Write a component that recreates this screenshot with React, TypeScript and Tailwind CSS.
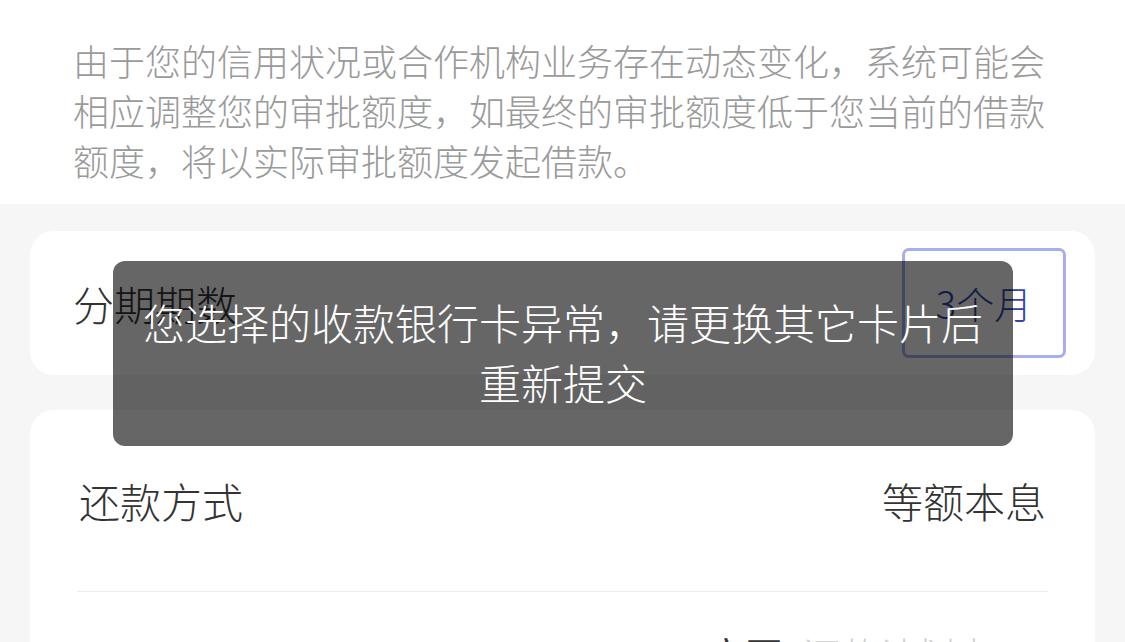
export default function App() {
  const font = { fontFamily: '"Noto Sans CJK SC", "Noto Sans", sans-serif' };

  return (
    <div className="relative h-[642px] w-[1125px] overflow-hidden bg-[#f6f6f6]" style={font}>
      {/* notice */}
      <div className="bg-white pl-[73px] pr-[60px] pt-[35px] pb-[19px]">
        <p className="text-[36px] font-light leading-[50px] text-[#9a9a9a]">
          由于您的信用状况或合作机构业务存在动态变化，系统可能会相应调整您的审批额度，如最终的审批额度低于您当前的借款额度，将以实际审批额度发起借款。
        </p>
      </div>

      <div className="flex flex-col gap-[35px] px-[30px] pt-[27px]">
        {/* term */}
        <div className="flex h-[144px] items-center justify-between rounded-[24px] bg-white pl-[43px] pr-[29px]">
          <span className="text-[41px] font-light leading-none text-[#333]">分期期数</span>
          <div className="flex h-[110px] w-[164px] items-center justify-center rounded-[7px] border-[3px] border-[#a7aef0]">
            <span className="text-[38px] font-light leading-none text-[#3444ad]">3个月</span>
          </div>
        </div>

        {/* repayment */}
        <div className="rounded-[24px] bg-white px-[47px]">
          <div className="flex h-[181px] items-center justify-between px-[2px]">
            <span className="text-[41px] font-light leading-none text-[#333]">还款方式</span>
            <span className="text-[41px] font-light leading-none text-[#333]">等额本息</span>
          </div>
          <div className="h-px bg-[#ececec]" />
          <div className="flex justify-end pt-[43px] pr-[55px]">
            <span className="text-[38px] leading-none text-[#333]">官网</span>
            <span className="ml-[20px] text-[38px] font-light leading-none text-[#cfcfcf]">还款计划表</span>
          </div>
        </div>
      </div>

      {/* toast */}
      <div className="absolute left-[113px] top-[261px] w-[900px] rounded-[12px] bg-black/60 px-[28px] pt-[31px] pb-[34px]">
        <p className="text-center text-[42px] font-light leading-[60px] text-white">
          您选择的收款银行卡异常，请更换其它卡片后
          <br />
          重新提交
        </p>
      </div>
    </div>
  );
}
